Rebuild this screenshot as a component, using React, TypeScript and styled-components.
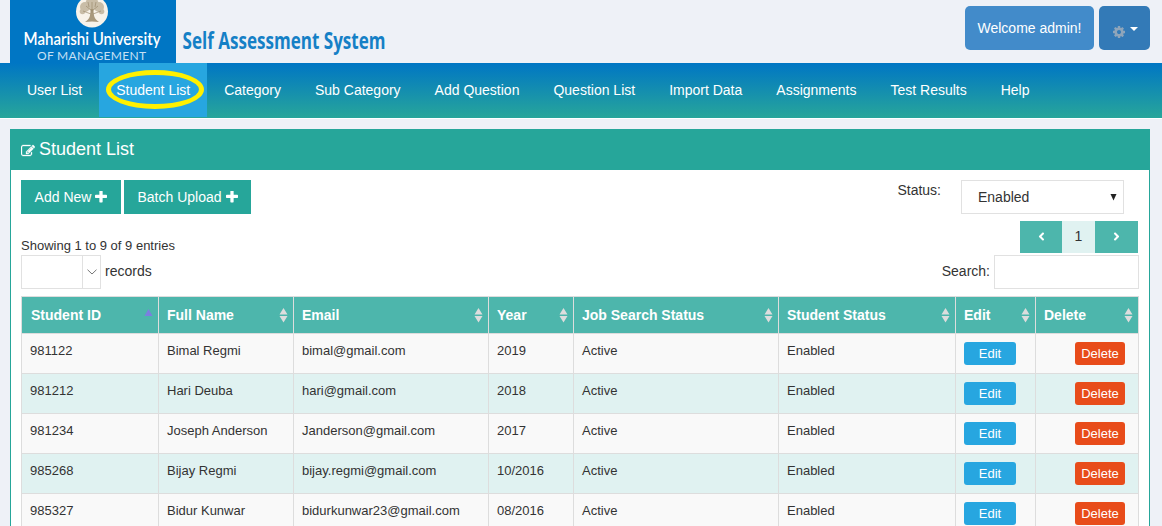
import React from "react";
import styled, { createGlobalStyle, css } from "styled-components";
import { FaAngleLeft, FaAngleRight } from "react-icons/fa";

const Global = createGlobalStyle`
  * { box-sizing: border-box; }
  body {
    margin: 0;
    background: #eef1f7;
    color: #333;
    font: 14px/20px "Liberation Sans", Arial, sans-serif;
    height: 526px;
    overflow: hidden;
  }
`;

const Header = styled.header`
  height: 63px;
  padding: 0 12px 0 10px;
  display: flex;
  justify-content: space-between;
`;
const Brand = styled.svg`
  display: block;
  width: 500px;
  height: 63px;
`;
const UserArea = styled.div`
  display: flex;
  gap: 5px;
  padding-top: 6px;
`;
const UserButton = styled.button<{ $dark?: boolean }>`
  height: 44px;
  width: ${(p) => (p.$dark ? 51 : 129)}px;
  border: 0;
  border-radius: 5px;
  padding: ${(p) => (p.$dark ? "0 0 0 2px" : "0")};
  background: ${(p) => (p.$dark ? "#337ab7" : "#428bca")};
  color: #fff;
  font: inherit;
  display: flex;
  align-items: center;
  justify-content: center;
  gap: 5px;
`;
const Gear = styled.svg`
  color: #8fa5ba;
  width: 12px;
  height: 12px;
  margin-top: 8px;
`;
const Caret = styled.span`
  border: 4px solid transparent;
  border-top-color: #fff;
  border-bottom: 0;
  margin-top: 2px;
`;

const Nav = styled.nav`
  height: 56px;
  padding-left: 10px;
  display: flex;
  background: linear-gradient(#0076c4, #27a59b 98%);
  border-bottom: 1px solid #fff;
`;
const NavItem = styled.a<{ $active?: boolean }>`
  position: relative;
  height: 54px;
  padding: 17px 17px 0;
  color: #fff;
  white-space: nowrap;
  ${(p) => p.$active && css`background: #27a6e0;`}
`;
const Ring = styled.span`
  position: absolute;
  left: 7px;
  top: 7px;
  width: 98px;
  height: 39px;
  border: 5px solid #fff000;
  border-radius: 50%;
`;

const Panel = styled.main`
  margin: 10px 12px 0 10px;
  height: 420px;
  border: 1px solid #26a69a;
  background: #fff;
`;
const PanelTitle = styled.h1`
  margin: 0;
  height: 40px;
  padding: 0 0 2px 10px;
  background: #26a69a;
  color: #fff;
  font-size: 18px;
  font-weight: 400;
  display: flex;
  align-items: center;
  gap: 4px;
`;
const TitleIcon = styled.svg`
  width: 14px;
  height: 14px;
  margin-top: 3px;
  stroke: currentColor;
  stroke-width: 40;
`;
const PanelBody = styled.div`
  padding: 10px;
`;
const Controls = styled.div`
  height: 116px;
  display: flex;
  justify-content: space-between;
`;
const LeftControls = styled.div`
  display: flex;
  flex-direction: column;
`;
const RightControls = styled.div`
  display: flex;
  flex-direction: column;
  align-items: flex-end;
`;
const ButtonRow = styled.div`
  display: flex;
  gap: 3px;
`;
const ActionButton = styled.button<{ $w: number }>`
  width: ${(p) => p.$w}px;
  height: 34px;
  padding: 0;
  border: 0;
  background: #26a69a;
  color: #fff;
  font: inherit;
  display: flex;
  align-items: center;
  justify-content: center;
  gap: 4px;
`;
const EntryInfo = styled.div`
  margin-top: 22px;
  height: 19px;
  font-size: 13px;
`;
const Line = styled.div`
  display: flex;
  align-items: center;
  gap: 4px;
  height: 34px;
`;
const LabelText = styled.span`
  margin-top: -2px;
`;
const PageSize = styled.div`
  width: 80px;
  height: 34px;
  border: 1px solid #e1e1e1;
  display: flex;
  justify-content: flex-end;
`;
const PageSizeArrow = styled.span`
  width: 18px;
  border-left: 1px solid #e1e1e1;
  display: flex;
  align-items: center;
  justify-content: center;
`;
const StatusRow = styled.div`
  display: flex;
  gap: 20px;
  padding-right: 15px;
`;
const StatusSelect = styled.div`
  width: 163px;
  height: 34px;
  padding: 0 6px 0 16px;
  border: 1px solid #e1e1e1;
  display: flex;
  align-items: center;
  justify-content: space-between;
`;
const Pager = styled.div`
  display: flex;
  height: 32px;
  margin: 7px 1px 2px 0;
`;
const PagerCell = styled.span<{ $w: number; $current?: boolean }>`
  width: ${(p) => p.$w}px;
  padding-bottom: 2px;
  display: flex;
  align-items: center;
  justify-content: center;
  background: ${(p) => (p.$current ? "#e0f2f1" : "#4db6ac")};
  color: ${(p) => (p.$current ? "#333" : "#fff")};
`;
const SearchInput = styled.input`
  width: 145px;
  height: 34px;
  border: 1px solid #e1e1e1;
  background: #fff;
`;

const Table = styled.table`
  table-layout: fixed;
  width: 1118px;
  border-collapse: collapse;
`;
const Th = styled.th`
  height: 37px;
  border: 1px solid #ddd;
  padding: 0 5px 0 8px;
  background: #4db6ac;
  color: #fff;
  text-align: left;
  &:first-child { padding-left: 9px; }
`;
const ThInner = styled.div`
  display: flex;
  align-items: center;
  justify-content: space-between;
`;
const SortIcon = styled.svg`
  width: 9px;
  height: 16px;
`;
const Row = styled.tr`
  background: #f9f9f9;
  &:nth-child(even) { background: #e0f2f1; }
`;
const Td = styled.td<{ $right?: boolean }>`
  height: 40px;
  border: 1px solid #ddd;
  padding: 8px 13px 0 8px;
  font-size: 13px;
  line-height: 18px;
  vertical-align: top;
  text-align: ${(p) => (p.$right ? "right" : "left")};
`;
const SmallButton = styled.button<{ $danger?: boolean }>`
  display: block;
  width: ${(p) => (p.$danger ? 50 : 52)}px;
  height: 23px;
  margin-left: ${(p) => (p.$danger ? "auto" : "0")};
  padding: 0;
  border: 0;
  border-radius: 3px;
  background: ${(p) => (p.$danger ? "#e84c1a" : "#27a6e0")};
  color: #fff;
  font: 13px/23px "Liberation Sans", Arial, sans-serif;
`;

const navItems = ["User List", "Student List", "Category", "Sub Category", "Add Question", "Question List", "Import Data", "Assignments", "Test Results", "Help"];
const columns: [string, number][] = [
  ["Student ID", 137], ["Full Name", 135], ["Email", 195], ["Year", 85],
  ["Job Search Status", 205], ["Student Status", 177], ["Edit", 80], ["Delete", 103],
];
const students = [
  ["981122", "Bimal Regmi", "bimal@gmail.com", "2019"],
  ["981212", "Hari Deuba", "hari@gmail.com", "2018"],
  ["981234", "Joseph Anderson", "Janderson@gmail.com", "2017"],
  ["985268", "Bijay Regmi", "bijay.regmi@gmail.com", "10/2016"],
  ["985327", "Bidur Kunwar", "bidurkunwar23@gmail.com", "08/2016"],
];

const Logo = () => (
  <Brand viewBox="0 0 500 63">
    <rect width="166" height="63" fill="#0076c4" />
    <circle cx="82" cy="11.5" r="16" fill="#f8f3ea" />
    <g fill="#c9bda7">
      <circle cx="82" cy="3.5" r="6.500" />
      <circle cx="75" cy="7" r="5" />
      <circle cx="89" cy="7" r="5" />
      <circle cx="72.500" cy="11.500" r="2.800" />
      <circle cx="91.500" cy="11.500" r="2.800" />
      <path d="M80.500 9h3c0 6 .5 10 5.500 13-4-.8-10-.8-14 0 5-3 5.500-7 5.500-13z" fill="#a9997c" />
    </g>
    <g fill="none" stroke="#9c8c70" strokeWidth="0.7">
      <path d="M82 13V2M82 11l-6-5M82 11l6-5M81 14l-8-3M83 14l8-3M79 7l-1-5M85 7l1-5" />
    </g>
    <text x="13.500" y="45" textLength="137" lengthAdjust="spacingAndGlyphs" fill="#fff" fontFamily="Lato, sans-serif" fontWeight="600" fontSize="16.500">Maharishi University</text>
    <text x="27" y="60" textLength="109" lengthAdjust="spacing" fill="#c6e0f4" fontFamily="Lato, sans-serif" fontSize="12">OF MANAGEMENT</text>
    <text x="172.500" y="48.500" textLength="203" lengthAdjust="spacingAndGlyphs" fill="#1580c6" fontFamily="'Open Sans', sans-serif" fontWeight="700" fontSize="24">Self Assessment System</text>
  </Brand>
);

const Plus = () => (
  <svg width="12" height="12" viewBox="192 192 1408 1408" fill="currentColor">
    <path d="M1600 736v192q0 40-28 68t-68 28h-416v416q0 40-28 68t-68 28h-192q-40 0-68-28t-28-68v-416h-416q-40 0-68-28t-28-68v-192q0-40 28-68t68-28h416v-416q0-40 28-68t68-28h192q40 0 68 28t28 68v416h416q40 0 68 28t28 68z" />
  </svg>
);

const Sort = ({ active }: { active: boolean }) => (
  <SortIcon viewBox="0 0 9 16">
    {active ? <path d="M4.500 2 8.500 9h-8z" fill="#7b7fe0" /> : <path d="M4.500 1 8.500 7.500h-8zM.5 9h8l-4 6.500z" fill="#ddd" />}
  </SortIcon>
);

export default function App() {
  return (
    <>
      <Global />
      <Header>
        <Logo />
        <UserArea>
          <UserButton>Welcome admin!</UserButton>
          <UserButton $dark>
            <Gear viewBox="128 128 1536 1536" fill="currentColor">
              <path d="M1152 896q0-106-75-181t-181-75-181 75-75 181 75 181 181 75 181-75 75-181zm512-109v222q0 12-8 23t-20 13l-185 28q-19 54-39 91 35 50 107 138 10 12 10 25t-9 23q-27 37-99 108t-94 71q-12 0-26-9l-138-108q-44 23-91 38-16 136-29 186-7 28-36 28h-222q-14 0-24.500-8.500t-11.500-21.500l-28-184q-49-16-90-37l-141 107q-10 9-25 9-14 0-25-11-126-114-165-168-7-10-7-23 0-12 8-23 15-21 51-66.500t54-70.500q-27-50-41-99l-183-27q-13-2-21-12.500t-8-23.500v-222q0-12 8-23t19-13l186-28q14-46 39-92-40-57-107-138-10-12-10-24 0-10 9-23 26-36 98.500-107.500t94.500-71.500q13 0 26 10l138 107q44-23 91-38 16-136 29-186 7-28 36-28h222q14 0 24.500 8.500t11.500 21.500l28 184q49 16 90 37l142-107q9-9 24-9 13 0 25 10 129 119 165 170 7 8 7 22 0 12-8 23-15 21-51 66.500t-54 70.500q26 50 41 98l183 28q13 2 21 12.500t8 23.500z" />
            </Gear>
            <Caret />
          </UserButton>
        </UserArea>
      </Header>
      <Nav>
        {navItems.map((n) => (
          <NavItem key={n} $active={n === "Student List"}>
            {n}
            {n === "Student List" && <Ring />}
          </NavItem>
        ))}
      </Nav>
      <Panel>
        <PanelTitle>
          <TitleIcon viewBox="0 0 1792 1792" fill="currentColor">
            <path d="M888 1184l116-116-152-152-116 116v56h96v96h56zm440-720q-16-16-33 1l-350 350q-17 17-1 33t33-1l350-350q17-17 1-33zm80 594v190q0 119-84.500 203.500t-203.500 84.500h-832q-119 0-203.500-84.500t-84.500-203.500v-832q0-119 84.500-203.500t203.500-84.500h832q63 0 117 25 15 7 18 23 3 17-9 29l-49 49q-14 14-32 8-23-6-45-6h-832q-66 0-113 47t-47 113v832q0 66 47 113t113 47h832q66 0 113-47t47-113v-126q0-13 9-22l64-64q15-15 35-7t20 29zm-96-738l288 288-672 672h-288v-288zm444 132l-92 92-288-288 92-92q28-28 68-28t68 28l152 152q28 28 28 68t-28 68z" />
          </TitleIcon>
          Student List
        </PanelTitle>
        <PanelBody>
          <Controls>
            <LeftControls>
              <ButtonRow>
                <ActionButton $w={100}>Add New<Plus /></ActionButton>
                <ActionButton $w={127}>Batch Upload<Plus /></ActionButton>
              </ButtonRow>
              <EntryInfo>Showing 1 to 9 of 9 entries</EntryInfo>
              <Line>
                <PageSize>
                  <PageSizeArrow>
                    <svg width="10" height="6" viewBox="0 0 10 6" fill="none" stroke="#777"><path d="M.5.7 5 5 9.500.7" /></svg>
                  </PageSizeArrow>
                </PageSize>
                <LabelText>records</LabelText>
              </Line>
            </LeftControls>
            <RightControls>
              <StatusRow>
                <span>Status:</span>
                <StatusSelect>
                  Enabled
                  <svg width="7" height="7" viewBox="0 0 7 7"><path d="M.5 0h6l-3 6.500z" fill="#222" /></svg>
                </StatusSelect>
              </StatusRow>
              <Pager>
                <PagerCell $w={42}><FaAngleLeft size={13} /></PagerCell>
                <PagerCell $w={33} $current>1</PagerCell>
                <PagerCell $w={43}><FaAngleRight size={13} /></PagerCell>
              </Pager>
              <Line>
                <LabelText>Search:</LabelText>
                <SearchInput />
              </Line>
            </RightControls>
          </Controls>
          <Table>
            <colgroup>{columns.map(([n, w]) => <col key={n} width={w} />)}</colgroup>
            <thead>
              <tr>
                {columns.map(([n], i) => (
                  <Th key={n}><ThInner>{n}<Sort active={i === 0} /></ThInner></Th>
                ))}
              </tr>
            </thead>
            <tbody>
              {students.map((s) => (
                <Row key={s[0]}>
                  {s.map((v) => <Td key={v}>{v}</Td>)}
                  <Td>Active</Td>
                  <Td>Enabled</Td>
                  <Td><SmallButton>Edit</SmallButton></Td>
                  <Td $right><SmallButton $danger>Delete</SmallButton></Td>
                </Row>
              ))}
            </tbody>
          </Table>
        </PanelBody>
      </Panel>
    </>
  );
}
